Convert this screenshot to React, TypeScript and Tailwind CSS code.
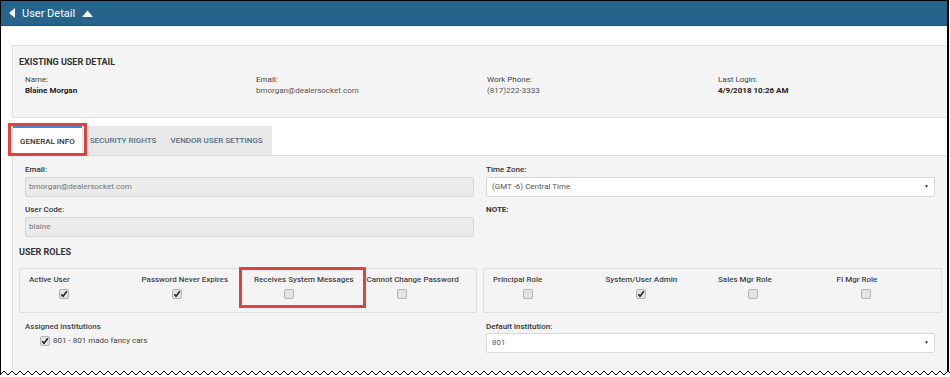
import React from "react";

const LEFT_ROLES = [
  { label: "Active User", checked: true, shift: "" },
  { label: "Password Never Expires", checked: true, shift: "" },
  { label: "Receives System Messages", checked: false, shift: "" },
  { label: "Cannot Change Password", checked: false, shift: "" },
];

const RIGHT_ROLES = [
  { label: "Principal Role", checked: false, shift: "" },
  { label: "System/User Admin", checked: true, shift: "" },
  { label: "Sales Mgr Role", checked: false, shift: "" },
  { label: "FI Mgr Role", checked: false, shift: "pl-[6px]" },
];

const SUMMARY = [
  { label: "Name:", value: "Blaine Morgan", bold: true },
  { label: "Email:", value: "bmorgan@dealersocket.com", bold: false },
  { label: "Work Phone:", value: "(817)222-3333", bold: false },
  { label: "Last Login:", value: "4/9/2018 10:26 AM", bold: true },
];

function Checkbox({ checked }: { checked: boolean }) {
  return (
    <span className="flex h-[10px] w-[10px] items-center justify-center rounded-[2px] border border-[#b3b3b3] bg-[#e4e4e4]">
      {checked ? (
        <svg width="8" height="8" viewBox="0 0 8 8">
          <path d="M1.2 4.3 L3 6.3 L6.9 1.2" fill="none" stroke="#222" strokeWidth="1.5" />
        </svg>
      ) : null}
    </span>
  );
}

function Field({ label, value, disabled }: { label: string; value: string; disabled?: boolean }) {
  return (
    <div>
      <p className="text-[8px] font-medium leading-[10px] text-[#333]">{label}</p>
      <div
        className={
          disabled
            ? "mt-[2px] flex h-[20px] items-center rounded-[2px] border border-[#d6d6d6] bg-[#ebebeb] px-[3px] text-[8px] text-[#777]"
            : "mt-[2px] flex h-[20px] items-center justify-between rounded-[2px] border border-[#d9d9d9] bg-white pl-[5px] pr-[5px] text-[8px] text-[#555]"
        }
      >
        <span>{value}</span>
        {disabled ? null : <span className="text-[5px] text-[#333]">▼</span>}
      </div>
    </div>
  );
}

function RoleBox({ roles }: { roles: typeof LEFT_ROLES }) {
  return (
    <div className="grid h-[45px] grid-cols-[repeat(4,112.5px)] rounded-[2px] border border-[#e0e0e0] pl-[9px] pt-[6px]">
      {roles.map((r) => (
        <div key={r.label}>
          <p className={`whitespace-nowrap text-[8px] font-medium leading-[10px] text-[#444] ${r.shift}`}>{r.label}</p>
          <div className="ml-[30px] mt-[4px]">
            <Checkbox checked={r.checked} />
          </div>
        </div>
      ))}
    </div>
  );
}

export default function App() {
  const zig: string[] = [];
  for (let i = 0; i <= 240; i++) zig.push(`${i * 4},${i % 2 ? 4 : 8}`);

  return (
    <div className="relative h-[377px] w-[950px] overflow-hidden bg-white font-[Roboto,sans-serif]">
      <div className="h-full w-[949px] border-l border-r-2 border-t border-black">
        <div className="flex h-[25px] items-center border-b border-[#1d5271] bg-[#26648b] pl-[8px]">
          <svg width="7" height="10" viewBox="0 0 7 10">
            <path d="M6 0 L0 5 L6 10 Z" fill="#fff" />
          </svg>
          <span className="ml-[6px] text-[11px] leading-none text-white">User Detail</span>
          <svg className="ml-[7px]" width="11" height="7" viewBox="0 0 11 7">
            <path d="M0 7 L5.5 0.5 L11 7 Z" fill="#fff" />
          </svg>
        </div>

        <div className="ml-[11px] mt-[19px] h-[73px] border border-r-0 border-[#e1e1e1] bg-[#f4f4f4] pt-[10px]">
          <p className="pl-[6px] text-[9px] font-bold leading-[12px] text-[#333]">EXISTING USER DETAIL</p>
          <div className="mt-[7px] grid grid-cols-[repeat(4,231px)] pl-[12px]">
            {SUMMARY.map((s) => (
              <div key={s.label} className="text-[8px] leading-[10px]">
                <p className="text-[#444]">{s.label}</p>
                <p className={s.bold ? "mt-[1px] font-bold text-[#222]" : "mt-[1px] text-[#555]"}>{s.value}</p>
              </div>
            ))}
          </div>
        </div>

        <div className="ml-[11px] mt-[8px] flex h-[29px] w-[260px] bg-[#e8e8e8] pl-px text-[8px] font-medium">
          <div className="flex items-center border-t-2 border-[#3b8ccc] bg-white px-[7px] text-[#333]">GENERAL INFO</div>
          <div className="flex items-center px-[8px] text-[#50708e]">SECURITY RIGHTS</div>
          <div className="flex items-center px-[6px] text-[#50708e]">VENDOR USER SETTINGS</div>
        </div>

        <div className="ml-[11px] h-[240px] border-l border-t border-[#dcdcdc] bg-[#f4f4f4] pl-[12px] pt-[9px]">
          <div className="grid grid-cols-[449px_449px] gap-x-[12px]">
            <div>
              <Field label="Email:" value="bmorgan@dealersocket.com" disabled />
              <div className="mt-[8px]">
                <Field label="User Code:" value="blaine" disabled />
              </div>
            </div>
            <div>
              <Field label="Time Zone:" value="(GMT -6) Central Time" />
              <p className="mt-[8px] text-[8px] font-bold leading-[10px] text-[#333]">NOTE:</p>
            </div>
          </div>

          <p className="-ml-[6px] mt-[9px] text-[9px] font-bold leading-[12px] text-[#333]">USER ROLES</p>
          <div className="-ml-[6px] mt-[10px] grid grid-cols-[458px_459px] gap-x-[6px]">
            <RoleBox roles={LEFT_ROLES} />
            <RoleBox roles={RIGHT_ROLES} />
          </div>

          <div className="mt-[9px] grid grid-cols-[449px_449px] gap-x-[12px]">
            <div>
              <p className="text-[8px] font-medium leading-[10px] text-[#444]">Assigned Institutions</p>
              <div className="ml-[15px] mt-[4px] flex h-[10px] items-center gap-[3px]">
                <Checkbox checked />
                <span className="text-[8px] text-[#444]">801 - 801 mado fancy cars</span>
              </div>
            </div>
            <div>
              <p className="text-[8px] font-medium leading-[10px] text-[#333]">Default Institution:</p>
              <div className="mt-px flex h-[20px] items-center justify-between rounded-[2px] border border-[#d9d9d9] bg-white px-[5px] text-[8px] text-[#555]">
                <span>801</span>
                <span className="text-[5px] text-[#333]">▼</span>
              </div>
            </div>
          </div>
        </div>
      </div>

      <div className="absolute left-[8px] top-[123px] h-[33px] w-[79px] border-[3px] border-[#e04141]" />
      <div className="absolute left-[239px] top-[267px] h-[41px] w-[127px] border-[3px] border-[#e04141]" />

      <svg className="absolute bottom-0 left-0" width="950" height="10" viewBox="0 0 950 10">
        <polygon points={`${zig.join(" ")} 960,10 0,10`} fill="#fff" />
        <polyline points={zig.join(" ")} fill="none" stroke="#000" strokeWidth="1" />
      </svg>
    </div>
  );
}
